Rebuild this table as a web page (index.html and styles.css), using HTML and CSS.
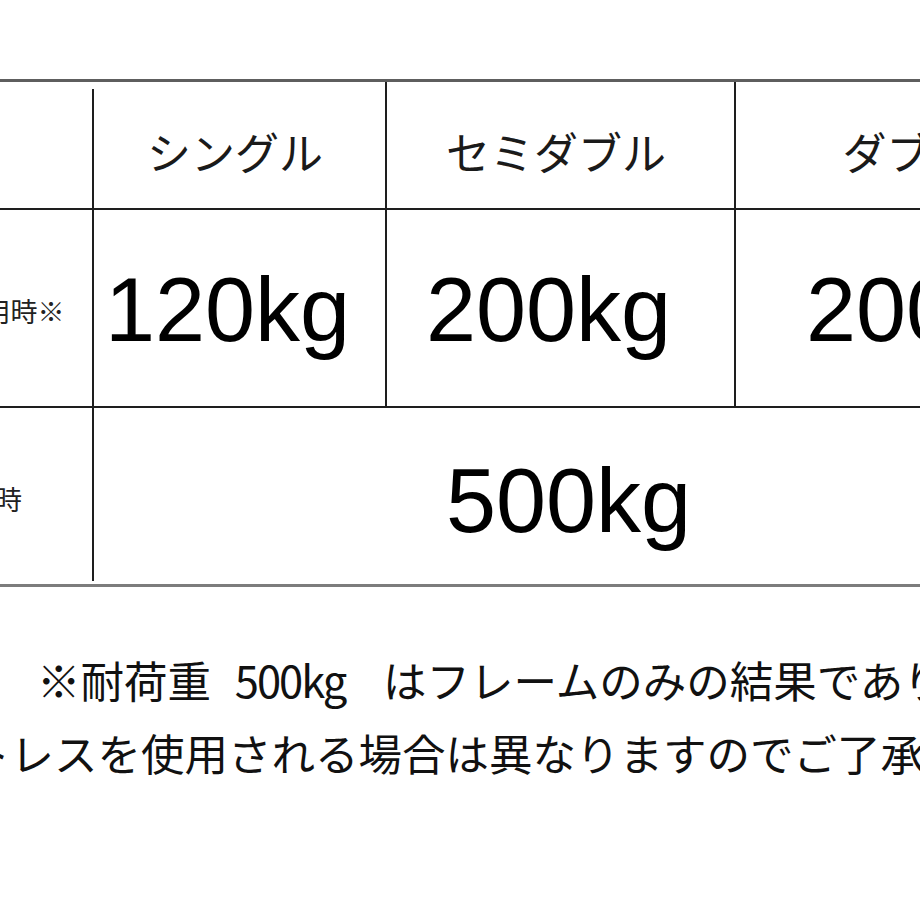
FILE: index.html
```html
<!DOCTYPE html>
<html lang="ja">
<head>
<meta charset="utf-8">
<link rel="stylesheet" href="styles.css">
</head>
<body>
<div class="page">
  <div class="spec">
    <div class="cell corner"></div>
    <div class="cell head">シングル</div>
    <div class="cell head">セミダブル</div>
    <div class="cell head last">ダブル</div>

    <div class="cell label">通常使用時※</div>
    <div class="cell value">120kg</div>
    <div class="cell value">200kg</div>
    <div class="cell value last shift">200kg</div>

    <div class="cell label label-bottom">静止時</div>
    <div class="cell value wide">500kg</div>
  </div>
  <p class="note">
    <span class="note-line first">※耐荷重 <span class="num">500kg</span> はフレームのみの結果であり、</span>
    <span class="note-line second">マットレスを使用される場合は異なりますのでご了承ください。</span>
  </p>
</div>
</body>
</html>
```
FILE: styles.css
```css
html, body {
  margin: 0;
  padding: 0;
  background: #ffffff;
  overflow: hidden;
}

.page {
  width: 1206px;
  margin-left: -125px;
  padding-top: 79px;
  color: #111;
  font-family: "Noto Sans CJK JP", "Noto Sans", sans-serif;
}

.spec {
  display: grid;
  grid-template-columns: 219px 293px 349px 345px;
  grid-template-rows: 128px 198px 176px;
  border-top: 3px solid #5e5e5e;
  border-bottom: 3px solid #7c7c7c;
}

.cell {
  display: flex;
  align-items: center;
  justify-content: center;
  box-sizing: border-box;
  border-right: 2px solid #1e1e1e;
  border-bottom: 2px solid #1e1e1e;
}

.cell.last {
  border-right: none;
}

.corner {
  border-right: none;
  background: linear-gradient(#1e1e1e, #1e1e1e) right bottom / 2px calc(100% - 7px) no-repeat;
}

.head {
  font-size: 44px;
  font-weight: 400;
  padding-top: 12px;
  padding-right: 9px;
  color: #1a1a1a;
}

.head.last {
  padding-right: 0;
}

.label {
  font-size: 27px;
  color: #222;
  padding-top: 4px;
}

.label-bottom {
  border-right: none;
  border-bottom: none;
  background: linear-gradient(#1e1e1e, #1e1e1e) right top / 2px calc(100% - 3px) no-repeat;
  padding-right: 6px;
}

.value {
  font-family: "Liberation Sans", Arial, sans-serif;
  font-size: 90px;
  color: #000;
  padding-right: 24px;
  padding-top: 4px;
}

.value.shift {
  padding-right: 0;
  padding-left: 40px;
}

.value.wide {
  grid-column: 2 / 5;
  border-right: none;
  border-bottom: none;
  padding-right: 38px;
  padding-top: 10px;
}

.note {
  margin: 56px 0 0;
  padding-left: 162px;
  font-size: 43.5px;
  line-height: 73px;
  color: #111;
  white-space: nowrap;
}

.note-line {
  display: block;
}

.note-line.second {
  margin-left: -157px;
}

.num {
  margin: 0 28px 0 14px;
  letter-spacing: -2px;
}
```
